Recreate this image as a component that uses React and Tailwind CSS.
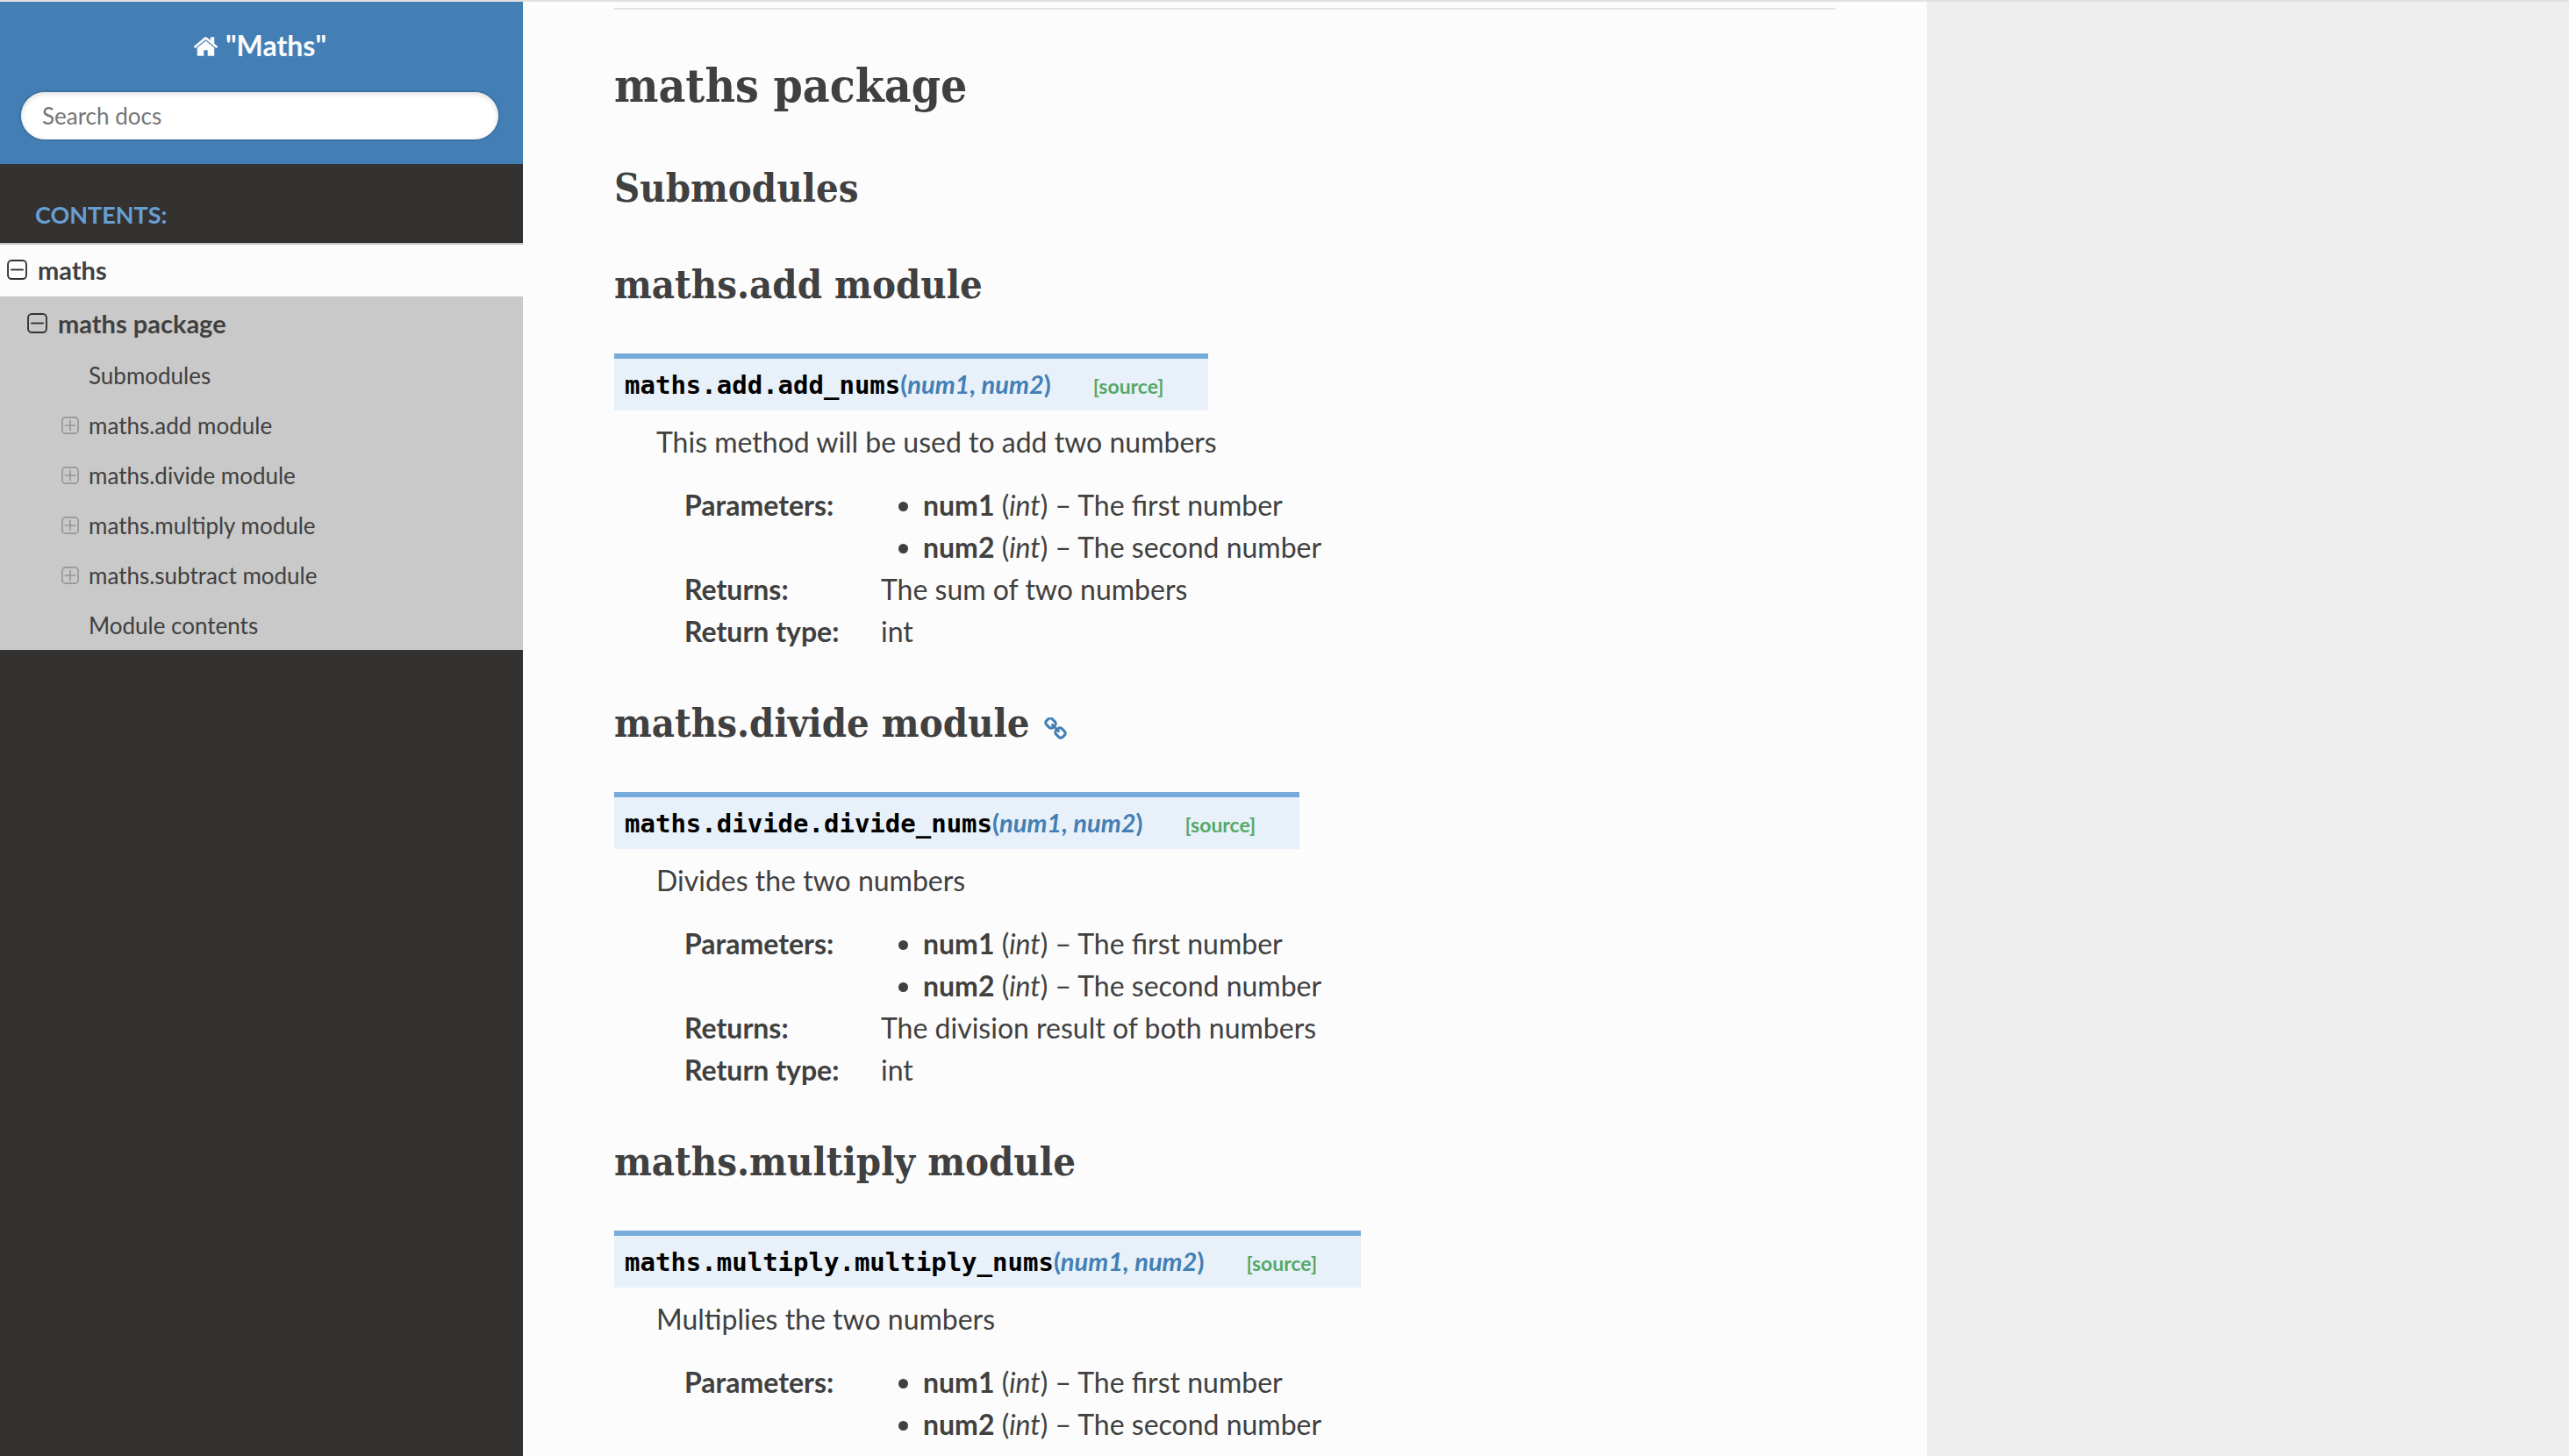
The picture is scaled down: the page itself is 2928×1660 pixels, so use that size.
const modules = [
  {
    name: 'add',
    fn: 'maths.add.add_nums',
    description: 'This method will be used to add two numbers',
    returns: 'The sum of two numbers',
  },
  {
    name: 'divide',
    fn: 'maths.divide.divide_nums',
    description: 'Divides the two numbers',
    returns: 'The division result of both numbers',
    anchor: true,
  },
  {
    name: 'multiply',
    fn: 'maths.multiply.multiply_nums',
    description: 'Multiplies the two numbers',
  },
];

const navItems = [
  { label: 'Submodules', href: '#submodules' },
  { label: 'maths.add module', href: '#add', children: true },
  { label: 'maths.divide module', href: '#divide', children: true },
  { label: 'maths.multiply module', href: '#multiply', children: true },
  { label: 'maths.subtract module', href: '#subtract', children: true },
  { label: 'Module contents', href: '#contents' },
];

const params = [
  ['num1', 'The first number'],
  ['num2', 'The second number'],
];

function HomeIcon() {
  return (
    <svg viewBox="38 192 1716 1344" className="h-[23px] w-[29px]" fill="currentColor" aria-hidden="true">
      <path d="M1472 992v480q0 26-19 45t-45 19h-384v-384h-256v384h-384q-26 0-45-19t-19-45v-480q0-1 .5-3t.5-3l575-474 575 474q1 2 1 6zm223-69l-62 74q-8 9-21 11h-3q-13 0-21-7l-692-577-692 577q-12 8-24 7-13-2-21-11l-62-74q-8-10-7-23.5t11-21.5l719-599q32-26 76-26t76 26l244 204v-195q0-14 9-23t23-9h192q14 0 23 9t9 23v408l219 182q10 8 11 21.5t-7 23.5z" />
    </svg>
  );
}

function LinkIcon() {
  return (
    <svg viewBox="64 64 1664 1664" className="h-[26px] w-[26px]" fill="currentColor" aria-hidden="true">
      <path d="M1520 1216q0-40-28-68l-208-208q-28-28-68-28-42 0-72 32 3 3 19 18.5t21.5 21.5 15 19 13 25.5 3.5 27.5q0 40-28 68t-68 28q-15 0-27.5-3.5t-25.5-13-19-15-21.5-21.5-18.5-19q-33 31-33 73 0 40 28 68l206 207q27 27 68 27 40 0 68-26l147-146q28-28 28-67zm-703-705q0-40-28-68l-206-207q-28-28-68-28-39 0-68 27l-147 146q-28 28-28 67 0 40 28 68l208 208q27 27 68 27 42 0 72-31-3-3-19-18.5t-21.5-21.5-15-19-13-25.5-3.5-27.5q0-40 28-68t68-28q15 0 27.5 3.5t25.5 13 19 15 21.5 21.5 18.5 19q33-31 33-73zm895 705q0 120-85 203l-147 146q-83 83-203 83-121 0-204-85l-206-207q-83-83-83-203 0-123 88-209l-88-88q-86 88-208 88-120 0-204-84l-208-208q-84-84-84-204t85-203l147-146q83-83 203-83 121 0 204 85l206 207q83 83 83 203 0 123-88 209l88 88q86-88 208-88 120 0 204 84l208 208q84 84 84 204z" />
    </svg>
  );
}

function ToggleIcon({ open }) {
  return (
    <svg viewBox="0 0 22 22" className={open ? 'h-[23px] w-[23px]' : 'h-5 w-5'} fill="none" stroke="currentColor" aria-hidden="true">
      <rect x="1" y="1" width="20" height="20" rx="4" strokeWidth="1.8" />
      <path d={open ? 'M4 11h14' : 'M4 11h14M11 4v14'} strokeWidth="1.8" />
    </svg>
  );
}

function Sidebar() {
  return (
    <aside className="w-[596px] shrink-0 bg-[#343131] text-[#404040]">
      <div className="flex h-[185px] flex-col items-center gap-[29px] bg-[#437fb5] pt-[26px] pr-[28px] pl-6">
        <a href="#home" className="flex items-center gap-2 text-[32px] leading-[48px] font-bold text-[#fcfcfc]">
          <HomeIcon />
          "Maths"
        </a>
        <input
          type="search"
          aria-label="Search docs"
          placeholder="Search docs"
          className="h-[54px] w-full rounded-full bg-white px-6 text-[26px] shadow-[inset_0_2px_6px_#ddd,0_0_0_2px_#3c72a3] outline-none placeholder:text-[#757575]"
        />
      </div>
      <nav aria-label="Contents">
        <p className="h-[90px] pt-[26px] pl-10 text-[27px] leading-[64px] font-bold text-[#689fd3] uppercase">Contents:</p>
        <div className="flex h-[61px] items-center gap-3 border-t-2 border-[#c9c9c9] bg-[#fcfcfc] pb-[2px] pl-[8px] text-[29px] font-bold">
          <button aria-label="Collapse maths" className="text-[#333]"><ToggleIcon open /></button>
          <a href="#maths">maths</a>
        </div>
        <div className="bg-[#c9c9c9]">
          <div className="flex h-[61px] items-center gap-3 pl-[31px] text-[29px] font-bold">
            <button aria-label="Collapse maths package" className="text-[#333]"><ToggleIcon open /></button>
            <a href="#package">maths package</a>
          </div>
          <ul className="text-[26px]">
            {navItems.map((item) => (
              <li key={item.label} className="flex h-[57px] items-center pl-[70px]">
                <span className="flex w-[31px]">
                  {item.children && (
                    <button aria-label={'Expand ' + item.label} className="text-[#969696]"><ToggleIcon /></button>
                  )}
                </span>
                <a href={item.href}>{item.label}</a>
              </li>
            ))}
          </ul>
        </div>
      </nav>
    </aside>
  );
}

const slab = 'font-["Roboto_Slab","DejaVu_Serif_Condensed","DejaVu_Serif",serif] font-bold';

function Module({ mod }) {
  return (
    <section id={mod.name} className="mb-[49px]">
      <h2 className={slab + ' flex items-center gap-4 text-[45px] leading-[64px]'}>
        maths.{mod.name} module
        {mod.anchor && (
          <a href="#divide" aria-label="Link to this heading" className="pt-3 text-[#437fb5]"><LinkIcon /></a>
        )}
      </h2>
      <dl className="mt-[46px]">
        <dt className="flex h-[65px] w-fit items-baseline border-t-[6px] border-[#77abdb] bg-[#e8f1f9] pt-[5px] pr-[50px] pl-3 leading-[48px] font-bold">
          <code className='font-["DejaVu_Sans_Mono",monospace] text-[29px] text-black'>{mod.fn}</code>
          <span className="text-[29px] text-[#437fb5]">(<em>num1, num2</em>)</span>
          <a href="#source" className="ml-12 text-[23px] text-[#55a868]">[source]</a>
        </dt>
        <dd className="mt-3 pl-12">
          <p>{mod.description}</p>
          <dl className="mt-6 grid grid-cols-[176px_1fr] gap-x-12 pl-8">
            <dt className="font-bold whitespace-nowrap">Parameters:</dt>
            <dd>
              <ul className="list-disc pl-12">
                {params.map(([name, text]) => (
                  <li key={name}>
                    <strong>{name}</strong> (<em>int</em>) – {text}
                  </li>
                ))}
              </ul>
            </dd>
            {mod.returns && (
              <>
                <dt className="font-bold whitespace-nowrap">Returns:</dt>
                <dd>{mod.returns}</dd>
                <dt className="font-bold whitespace-nowrap">Return type:</dt>
                <dd>int</dd>
              </>
            )}
          </dl>
        </dd>
      </dl>
    </section>
  );
}

export default function App() {
  return (
    <div className="flex h-screen overflow-hidden border-t-2 border-[#e1e1e1] bg-[#eeeeee] font-[Lato,sans-serif] text-[32px] leading-[48px] text-[#404040]">
      <Sidebar />
      <main className="h-fit min-h-full w-full max-w-[1600px] bg-[#fcfcfc] px-[104px] pt-[7px]">
        <hr className="mb-[46px] border-t-2 border-[#e3e3e3]" />
        <h1 className={slab + ' text-[53px] leading-[80px]'}>maths package</h1>
        <h2 className={slab + ' my-[46px] text-[45px] leading-[64px]'}>Submodules</h2>
        {modules.map((mod) => (
          <Module key={mod.name} mod={mod} />
        ))}
      </main>
    </div>
  );
}
